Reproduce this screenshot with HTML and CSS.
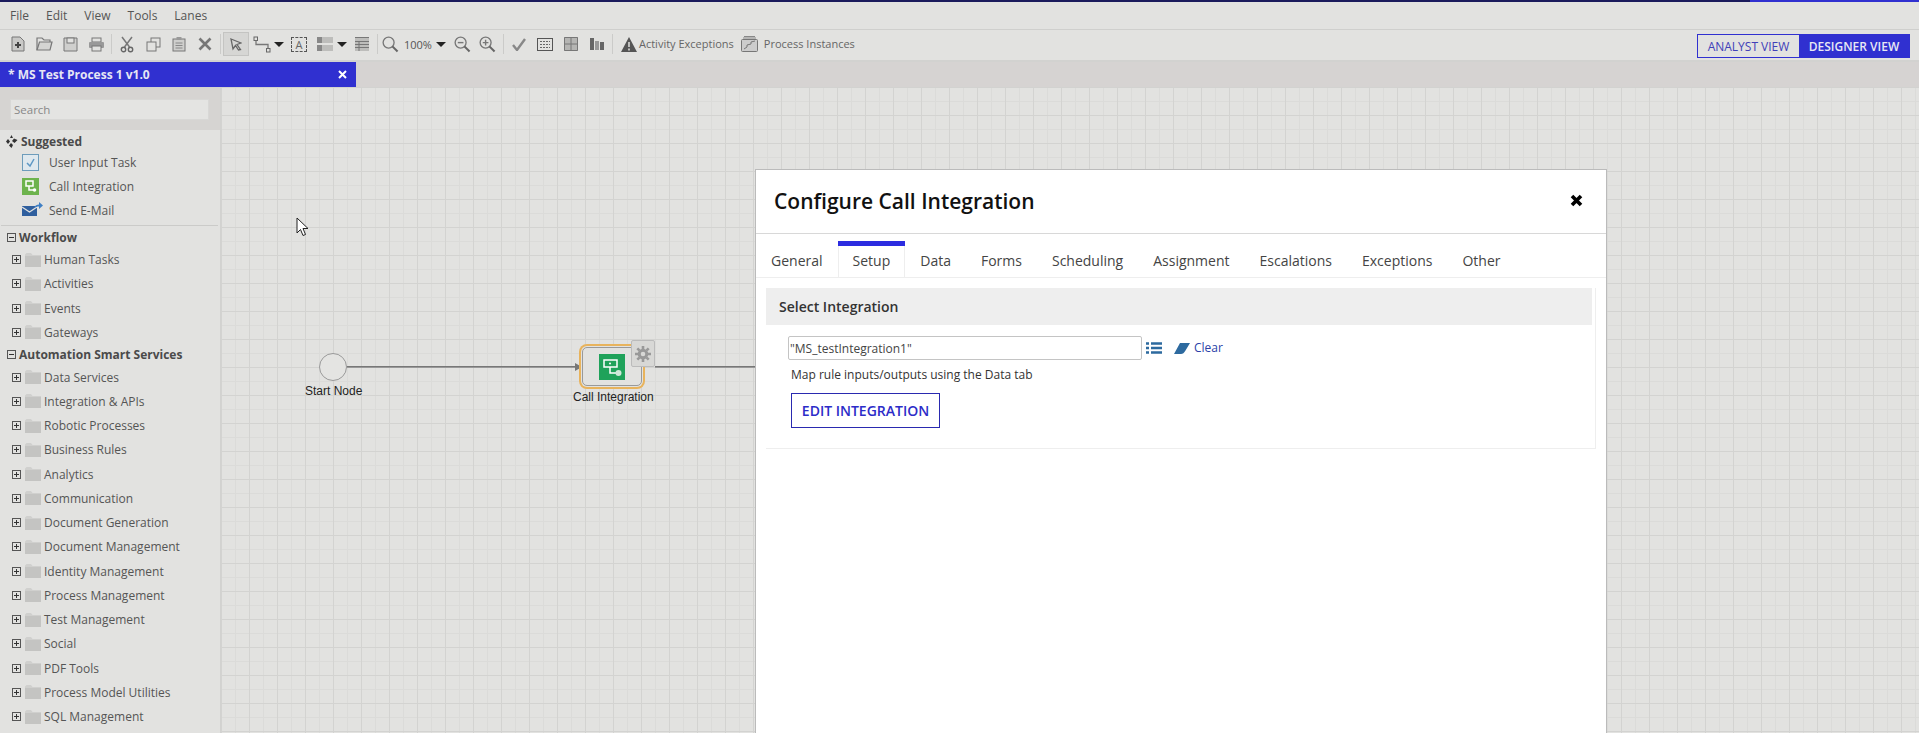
FILE: index.html
```html
<!DOCTYPE html>
<html lang="en">
<head>
    <meta charset="UTF-8">
    <title>MS Test Process 1 v1.0</title>
    <link rel="stylesheet" href="styles.css">
</head>
<body>
    <svg class="icon-defs" width="0" height="0">
        <symbol id="folder" viewBox="0 0 16 14">
            <path d="M0 3V1.500L1.500 0H6L7.500 2H16V3Z" fill="#d0d0ce"/>
            <rect y="3" width="16" height="11" fill="#c4c4c2"/>
        </symbol>
        <symbol id="plus-box" viewBox="0 0 9 9">
            <rect x=".5" y=".5" width="8" height="8" fill="none" stroke="#555"/>
            <path d="M2 4.500H7M4.500 2V7" stroke="#333" fill="none"/>
        </symbol>
        <symbol id="minus-box" viewBox="0 0 9 9">
            <rect x=".5" y=".5" width="8" height="8" fill="none" stroke="#555"/>
            <path d="M2 4.500H7" stroke="#333" fill="none"/>
        </symbol>
        <symbol id="loupe" viewBox="0 0 18 18">
            <circle cx="7" cy="7" r="5.800" fill="none" stroke="#777" stroke-width="1.400"/>
            <path d="M11 11L16.500 16.500" stroke="#666" stroke-width="2.200"/>
        </symbol>
    </svg>

    <div class="top-line"></div>

    <nav class="menu-bar">
        <span>File</span>
        <span>Edit</span>
        <span>View</span>
        <span>Tools</span>
        <span>Lanes</span>
    </nav>

    <div class="toolbar">
        <span class="tool"><svg width="14" height="16" viewBox="0 0 14 16"><path d="M1 1H9L13 5V15H1Z" fill="#c9c9c7" stroke="#777"/><path d="M4 9H10M7 6V12" stroke="#444" stroke-width="2"/></svg></span>
        <span class="tool"><svg width="17" height="14" viewBox="0 0 17 14"><path d="M1 13V1H6L8 3H14V5" fill="none" stroke="#777" stroke-width="1.200"/><path d="M1 13L3.500 5H16L14 13Z" fill="#d4d4d2" stroke="#777" stroke-width="1.200"/></svg></span>
        <span class="tool"><svg width="15" height="15" viewBox="0 0 15 15"><path d="M1 1H14V14H1Z" fill="#cfcfcd" stroke="#777"/><rect x="4" y="1" width="7" height="5" fill="#e2e2e0" stroke="#777"/></svg></span>
        <span class="tool"><svg width="17" height="15" viewBox="0 0 17 15"><rect x="4" y="1" width="9" height="4" fill="none" stroke="#777"/><rect x="1" y="5" width="15" height="6" rx="1" fill="#999"/><rect x="4" y="9" width="9" height="5" fill="#e2e2e0" stroke="#777"/></svg></span>
        <i class="tool-sep"></i>
        <span class="tool"><svg width="14" height="17" viewBox="0 0 14 17"><path d="M2 1L9.500 11M12 1L4.500 11" stroke="#777" stroke-width="1.500" fill="none"/><circle cx="3.500" cy="13.500" r="2.200" fill="none" stroke="#666" stroke-width="1.400"/><circle cx="10.500" cy="13.500" r="2.200" fill="none" stroke="#666" stroke-width="1.400"/></svg></span>
        <span class="tool"><svg width="15" height="15" viewBox="0 0 15 15"><rect x="5" y="1" width="9" height="9" fill="none" stroke="#777"/><rect x="1" y="5" width="9" height="9" fill="#e2e2e0" stroke="#777"/></svg></span>
        <span class="tool"><svg width="14" height="16" viewBox="0 0 14 16"><rect x="1" y="3" width="12" height="12" fill="#cfcfcd" stroke="#777"/><rect x="4.500" y="1" width="5" height="3" fill="#999"/><path d="M3.500 7H10.500M3.500 9.500H10.500M3.500 12H10.500" stroke="#888"/></svg></span>
        <span class="tool"><svg width="14" height="14" viewBox="0 0 14 14"><path d="M1.500 1.500L12.500 12.500M12.500 1.500L1.500 12.500" stroke="#777" stroke-width="2.600"/></svg></span>
        <i class="tool-sep"></i>
        <span class="tool tool-active"><svg width="12" height="13" viewBox="0 0 12 13"><path d="M1 1L11 5L7 6.500L10.500 11.500L8.500 12L5.500 7.500L3 11Z" fill="none" stroke="#666" stroke-width="1.300"/></svg></span>
        <span class="tool"><svg width="18" height="17" viewBox="0 0 18 17"><rect x="1" y="1" width="3.500" height="3.500" fill="none" stroke="#666"/><rect x="13.500" y="12.500" width="3.500" height="3.500" fill="none" stroke="#666"/><path d="M3 4.500V8.500H15V12.500" fill="none" stroke="#777" stroke-width="1.300"/></svg></span>
        <span class="tool-caret"></span>
        <span class="tool"><span class="text-tool">A</span></span>
        <span class="tool"><svg width="16" height="14" viewBox="0 0 16 14"><rect width="16" height="6" fill="#888"/><rect y="8" width="16" height="6" fill="#888"/><rect x="5" y="0" width="11" height="6" fill="#bdbdbb"/><rect x="5" y="8" width="11" height="6" fill="#bdbdbb"/></svg></span>
        <span class="tool-caret"></span>
        <span class="tool"><svg width="14" height="14" viewBox="0 0 14 14"><rect width="14" height="14" fill="#bdbdbb"/><path d="M0 .5H14M0 4.500H14M0 7.500H14M0 10.500H14M4 4V14" stroke="#777"/></svg></span>
        <i class="tool-sep"></i>
        <span class="tool tool-zoom"><svg width="17" height="17"><use href="#loupe"/></svg></span>
        <span class="zoom-value">100%</span>
        <span class="tool-caret"></span>
        <span class="tool tool-zoom zoom-out"><svg width="17" height="17" viewBox="0 0 18 18"><use href="#loupe"/><path d="M4 7H10" stroke="#777" stroke-width="1.500"/></svg></span>
        <span class="tool tool-zoom zoom-in"><svg width="17" height="17" viewBox="0 0 18 18"><use href="#loupe"/><path d="M4 7H10M7 4V10" stroke="#777" stroke-width="1.500"/></svg></span>
        <i class="tool-sep"></i>
        <span class="tool"><svg width="14" height="13" viewBox="0 0 14 13"><path d="M1 7L5 12L13 1" fill="none" stroke="#888" stroke-width="2.400"/></svg></span>
        <span class="tool"><svg width="16" height="13" viewBox="0 0 16 13"><rect x=".5" y=".5" width="15" height="12" fill="none" stroke="#555"/><path d="M3 3.500H13M3 6.500H13M3 9.500H13" stroke="#666" stroke-dasharray="2 1"/></svg></span>
        <span class="tool"><svg width="14" height="14" viewBox="0 0 14 14"><rect width="14" height="14" fill="#b5b5b3"/><path d="M7 0V14M0 7H14M.5 .5H13.500V13.500H.5Z" stroke="#777" fill="none"/></svg></span>
        <span class="tool"><svg width="14" height="12" viewBox="0 0 14 12"><rect width="4" height="12" fill="#666"/><rect x="5" y="3" width="4" height="9" fill="#999"/><rect x="10" y="4" width="4" height="8" fill="#666"/></svg></span>
        <i class="tool-sep"></i>
        <span class="tool-label">
            <svg width="16" height="15" viewBox="0 0 16 15"><path d="M8 0L16 15H0Z" fill="#555"/><path d="M8 5V10M8 11.500V13.500" stroke="#e2e2e0" stroke-width="1.500"/></svg>
            <span>Activity Exceptions</span>
        </span>
        <span class="tool-label">
            <svg width="17" height="16" viewBox="0 0 17 16"><path d="M3 .5H14M2 2H15" stroke="#888"/><rect x=".5" y="3.500" width="16" height="12" rx="1" fill="#ccc" stroke="#777"/><path d="M3 13L6 11V9L10 8V6L14 5" fill="none" stroke="#777"/></svg>
            <span>Process Instances</span>
        </span>

        <div class="view-switch">
            <span class="view-analyst">ANALYST VIEW</span>
            <span class="view-designer">DESIGNER VIEW</span>
        </div>
    </div>

    <div class="tab-strip">
        <div class="doc-tab">
            <span>* MS Test Process 1 v1.0</span>
            <svg width="9" height="9" viewBox="0 0 9 9"><path d="M1 1L8 8M8 1L1 8" stroke="#fff" stroke-width="2"/></svg>
        </div>
    </div>

    <div class="workspace">
        <aside class="palette">
            <div class="palette-search">
                <input type="text" placeholder="Search">
            </div>
            <div class="palette-list">
                <div class="suggested-head">
                    <svg width="13" height="13" viewBox="0 0 13 13"><path d="M6.500 0L8 3L5 3ZM3 4L5 6.500L3 9L1 6.500ZM9 3.500L12.500 5L9.500 8L7 6ZM6 8L8 10L6.500 13L4 10.500Z" fill="#333"/></svg>
                    Suggested
                </div>
                <div class="suggested-item">
                    <svg width="17" height="17" viewBox="0 0 17 17"><rect x=".5" y=".5" width="16" height="16" fill="#dfe8ee" stroke="#6d9cbb"/><path d="M5 9L8 12L12 5" fill="none" stroke="#5d97c4" stroke-width="1.500"/></svg>
                    User Input Task
                </div>
                <div class="suggested-item">
                    <svg width="17" height="17" viewBox="0 0 17 17"><rect width="17" height="17" fill="#6db34d"/><path d="M4 3H11V8H4ZM7 8V12H11" fill="none" stroke="#fff" stroke-width="1.500"/><circle cx="12.500" cy="12" r="1.800" fill="#fff"/></svg>
                    Call Integration
                </div>
                <div class="suggested-item">
                    <svg width="21" height="14" viewBox="0 0 21 14"><rect y="4" width="15" height="10" fill="#2f5f9e"/><path d="M0 5L7.500 10L15 5" fill="none" stroke="#e2e2e0" stroke-width="1.200"/><path d="M12 6C13 3 15 2.500 17 2.500V0L21 3.500L17 7V4.500C15 4.500 13.500 5 12 6Z" fill="#3f7fc4"/></svg>
                    Send E-Mail
                </div>
                <div class="palette-rule"></div>

                <div class="group-head"><svg width="9" height="9"><use href="#minus-box"/></svg>Workflow</div>
                <div class="tree-row"><svg width="9" height="9"><use href="#plus-box"/></svg><svg width="16" height="14"><use href="#folder"/></svg>Human Tasks</div>
                <div class="tree-row"><svg width="9" height="9"><use href="#plus-box"/></svg><svg width="16" height="14"><use href="#folder"/></svg>Activities</div>
                <div class="tree-row"><svg width="9" height="9"><use href="#plus-box"/></svg><svg width="16" height="14"><use href="#folder"/></svg>Events</div>
                <div class="tree-row"><svg width="9" height="9"><use href="#plus-box"/></svg><svg width="16" height="14"><use href="#folder"/></svg>Gateways</div>

                <div class="group-head"><svg width="9" height="9"><use href="#minus-box"/></svg>Automation Smart Services</div>
                <div class="tree-row"><svg width="9" height="9"><use href="#plus-box"/></svg><svg width="16" height="14"><use href="#folder"/></svg>Data Services</div>
                <div class="tree-row"><svg width="9" height="9"><use href="#plus-box"/></svg><svg width="16" height="14"><use href="#folder"/></svg>Integration &amp; APIs</div>
                <div class="tree-row"><svg width="9" height="9"><use href="#plus-box"/></svg><svg width="16" height="14"><use href="#folder"/></svg>Robotic Processes</div>
                <div class="tree-row"><svg width="9" height="9"><use href="#plus-box"/></svg><svg width="16" height="14"><use href="#folder"/></svg>Business Rules</div>
                <div class="tree-row"><svg width="9" height="9"><use href="#plus-box"/></svg><svg width="16" height="14"><use href="#folder"/></svg>Analytics</div>
                <div class="tree-row"><svg width="9" height="9"><use href="#plus-box"/></svg><svg width="16" height="14"><use href="#folder"/></svg>Communication</div>
                <div class="tree-row"><svg width="9" height="9"><use href="#plus-box"/></svg><svg width="16" height="14"><use href="#folder"/></svg>Document Generation</div>
                <div class="tree-row"><svg width="9" height="9"><use href="#plus-box"/></svg><svg width="16" height="14"><use href="#folder"/></svg>Document Management</div>
                <div class="tree-row"><svg width="9" height="9"><use href="#plus-box"/></svg><svg width="16" height="14"><use href="#folder"/></svg>Identity Management</div>
                <div class="tree-row"><svg width="9" height="9"><use href="#plus-box"/></svg><svg width="16" height="14"><use href="#folder"/></svg>Process Management</div>
                <div class="tree-row"><svg width="9" height="9"><use href="#plus-box"/></svg><svg width="16" height="14"><use href="#folder"/></svg>Test Management</div>
                <div class="tree-row"><svg width="9" height="9"><use href="#plus-box"/></svg><svg width="16" height="14"><use href="#folder"/></svg>Social</div>
                <div class="tree-row"><svg width="9" height="9"><use href="#plus-box"/></svg><svg width="16" height="14"><use href="#folder"/></svg>PDF Tools</div>
                <div class="tree-row"><svg width="9" height="9"><use href="#plus-box"/></svg><svg width="16" height="14"><use href="#folder"/></svg>Process Model Utilities</div>
                <div class="tree-row"><svg width="9" height="9"><use href="#plus-box"/></svg><svg width="16" height="14"><use href="#folder"/></svg>SQL Management</div>
            </div>
        </aside>

        <main class="canvas">
            <!-- diagram nodes, placed by canvas coordinates -->
            <div class="flow-line flow-in"></div>
            <div class="flow-arrow"></div>
            <div class="flow-line flow-out"></div>
            <div class="start-node"></div>
            <div class="node-label start-label">Start Node</div>
            <div class="task-node">
                <svg width="26" height="26" viewBox="0 0 26 26"><rect width="26" height="26" fill="#1fa25a"/><path d="M5 6H18V13H5ZM11 13V19H17" fill="none" stroke="#fff" stroke-width="1.500"/><circle cx="11" cy="9.500" r="1" fill="#fff"/><circle cx="19.500" cy="19" r="3" fill="#cfe9d9"/></svg>
            </div>
            <div class="gear-box">
                <svg width="16" height="16" viewBox="0 0 16 16"><circle cx="8" cy="8" r="3.800" fill="none" stroke="#999" stroke-width="3"/><path d="M8 0V3M8 13V16M0 8H3M13 8H16M2.300 2.300L4.400 4.400M11.600 11.600L13.700 13.700M13.700 2.300L11.600 4.400M4.400 11.600L2.300 13.700" stroke="#999" stroke-width="2.600"/></svg>
            </div>
            <div class="node-label task-label">Call Integration</div>

            <svg class="mouse-cursor" width="13" height="20" viewBox="0 0 13 20"><path d="M1 1V16L4.500 12.500L7 18.500L9.500 17.500L7 11.500H12Z" fill="#fff" stroke="#222"/></svg>

            <section class="modal">
                <header class="modal-head">
                    <h1>Configure Call Integration</h1>
                    <svg width="13" height="13" viewBox="0 0 13 13"><path d="M2 2L11 11M11 2L2 11" stroke="#000" stroke-width="3.600"/></svg>
                </header>
                <div class="modal-tabs">
                    <span class="modal-tab">General</span>
                    <span class="modal-tab modal-tab-active">Setup</span>
                    <span class="modal-tab">Data</span>
                    <span class="modal-tab">Forms</span>
                    <span class="modal-tab">Scheduling</span>
                    <span class="modal-tab">Assignment</span>
                    <span class="modal-tab">Escalations</span>
                    <span class="modal-tab">Exceptions</span>
                    <span class="modal-tab">Other</span>
                </div>
                <div class="setup-box">
                    <h2>Select Integration</h2>
                    <div class="setup-body">
                        <div class="rule-row">
                            <input type="text" value="&quot;MS_testIntegration1&quot;">
                            <svg class="list-icon" width="16" height="12" viewBox="0 0 16 12"><path d="M0 1.500H3M5 1.500H16M0 6H3M5 6H16M0 10.500H3M5 10.500H16" stroke="#2d6a9f" stroke-width="2.400"/></svg>
                            <svg class="eraser-icon" width="16" height="11" viewBox="0 0 16 11"><path d="M6 0H16L11.500 7.500Q9.500 11 7 11H0Z" fill="#2d6a9f"/></svg>
                            <a class="clear-link" href="#">Clear</a>
                        </div>
                        <p class="help-text">Map rule inputs/outputs using the Data tab</p>
                        <button type="button" class="btn-edit">EDIT INTEGRATION</button>
                    </div>
                </div>
            </section>
        </main>
    </div>
</body>
</html>
```

FILE: styles.css
```css
html, body {
    height: 100%;
}
body {
    margin: 0;
    display: flex;
    flex-direction: column;
    overflow: hidden;
    background: #e2e2e0;
    font-family: 'Open Sans', sans-serif;
    font-size: 12px;
    color: #555;
}
.icon-defs {
    position: absolute;
}

.top-line {
    height: 2px;
    flex: none;
    background: linear-gradient(to right, #1a1a5c 1750px, #3030d0 1750px);
}

/* menu and toolbar */
.menu-bar {
    height: 28px;
    flex: none;
    box-sizing: border-box;
    display: flex;
    align-items: center;
    gap: 17px;
    padding-left: 10px;
    border-bottom: 1px solid #cfcfcd;
}
.toolbar {
    height: 32px;
    flex: none;
    box-sizing: border-box;
    display: flex;
    align-items: center;
    padding: 0 9px 2px 5px;
    border-bottom: 2px solid #d2d2d0;
}
.tool {
    width: 26px;
    height: 24px;
    flex: none;
    box-sizing: border-box;
    display: flex;
    align-items: center;
    justify-content: center;
}
.tool-active {
    background: #d6d6d4;
    border: 1px solid #c4c4c2;
}
.tool-sep {
    width: 1px;
    height: 20px;
    flex: none;
    margin: 0 2px;
    background: #cbcbc9;
}
.tool-caret {
    width: 0;
    height: 0;
    flex: none;
    margin: 0 2px 0 -1px;
    border-left: 5px solid transparent;
    border-right: 5px solid transparent;
    border-top: 5px solid #222;
}
.text-tool {
    width: 16px;
    height: 15px;
    box-sizing: border-box;
    border: 1px dashed #555;
    font-size: 11px;
    line-height: 14px;
    text-align: center;
    color: #666;
}
.tool-zoom {
    width: 20px;
}
.zoom-out {
    margin-left: 5px;
}
.zoom-in {
    margin-left: 5px;
    margin-right: 3px;
}
.zoom-value {
    margin: 0 5px 0 4px;
    font-size: 11px;
}
.tool-label {
    display: flex;
    align-items: center;
    gap: 2px;
    margin-left: 6px;
    font-size: 11px;
    color: #666;
}
.tool-label span {
    margin-top: -2px;
}
.tool-label + .tool-label {
    margin-left: 7px;
    gap: 6px;
}
.view-switch {
    display: flex;
    height: 24px;
    margin-left: auto;
    align-self: flex-end;
    box-sizing: border-box;
    border: 1px solid #3030d0;
}
.view-switch span {
    display: flex;
    align-items: center;
    justify-content: center;
    font-size: 12px;
}
.view-analyst {
    width: 101px;
    color: #4040b8;
}
.view-designer {
    width: 110px;
    background: #3030d0;
    color: #e8e8f4;
    font-weight: 600;
}

/* document tab */
.tab-strip {
    height: 25px;
    flex: none;
    background: #d6d3d2;
}
.doc-tab {
    width: 356px;
    height: 25px;
    box-sizing: border-box;
    display: flex;
    align-items: center;
    justify-content: space-between;
    padding: 0 9px 1px 8px;
    background: #3030d0;
    color: #e6e6f4;
    font-size: 12px;
    font-weight: 700;
}

.workspace {
    flex: 1;
    min-height: 0;
    display: flex;
    border-top: 1px solid #d2d2d0;
}

/* left palette */
.palette {
    width: 220px;
    flex: none;
    overflow: hidden;
    border-right: 1px solid #d2d2d0;
    background: #e2e2e0;
}
.palette-search {
    height: 42px;
    box-sizing: border-box;
    padding: 11px 11px 0 10px;
    background: #d6d4d2;
}
.palette-search input {
    width: 100%;
    height: 21px;
    box-sizing: border-box;
    padding: 0 3px;
    border: 1px solid #d8d8d6;
    background: #e4e4e2;
    font-family: inherit;
    font-size: 11.5px;
}
.palette-search input::placeholder {
    color: #888;
}
.palette-list {
    padding-top: 2px;
}
.suggested-head {
    height: 18px;
    display: flex;
    align-items: center;
    gap: 3px;
    padding-left: 5px;
    font-weight: 700;
    color: #4a4a4a;
}
.suggested-item {
    height: 24px;
    position: relative;
    display: flex;
    align-items: center;
    padding-left: 49px;
}
.suggested-item svg {
    position: absolute;
    left: 22px;
    top: 4px;
}
.palette-rule {
    margin: 3px 2px 1px 1px;
    border-top: 1px solid #cbcbc9;
}
.group-head {
    height: 20.5px;
    display: flex;
    align-items: center;
    gap: 3px;
    padding-left: 7px;
    font-weight: 700;
    color: #4a4a4a;
}
.tree-row {
    height: 24.25px;
    display: flex;
    align-items: center;
    padding-left: 12px;
}
.tree-row svg + svg {
    margin: 0 3px 0 4px;
}

/* canvas */
.canvas {
    flex: 1;
    min-width: 0;
    position: relative;
    overflow: hidden;
    background-color: #e2e2e0;
    background-image:
        linear-gradient(to right, #d3d3d1 1px, transparent 1px),
        linear-gradient(to bottom, #d3d3d1 1px, transparent 1px),
        linear-gradient(to right, #dbdbd9 1px, transparent 1px),
        linear-gradient(to bottom, #dbdbd9 1px, transparent 1px);
    background-size: 28px 28px, 28px 28px, 14px 14px, 14px 14px;
    background-position: 28px 27px, 28px 27px, 14px 13px, 14px 13px;
}
.flow-line {
    position: absolute;
    top: 278px;
    height: 1px;
    background: #777;
    border-bottom: 1px solid #999;
}
.flow-in {
    left: 126px;
    width: 235px;
}
.flow-out {
    left: 434px;
    width: 102px;
}
.flow-arrow {
    position: absolute;
    left: 354px;
    top: 275px;
    border-left: 7px solid #777;
    border-top: 4px solid transparent;
    border-bottom: 4px solid transparent;
}
.start-node {
    position: absolute;
    left: 98px;
    top: 265px;
    width: 28px;
    height: 28px;
    box-sizing: border-box;
    border: 1px solid #999;
    border-radius: 50%;
    background: #e4e4e2;
}
.node-label {
    position: absolute;
    font-family: 'Liberation Sans', sans-serif;
    font-size: 12px;
    white-space: nowrap;
    color: #222;
}
.start-label {
    left: 84px;
    top: 296px;
}
.task-label {
    left: 352px;
    top: 302px;
}
.task-node {
    position: absolute;
    left: 361px;
    top: 259px;
    width: 60px;
    height: 39px;
    box-sizing: border-box;
    display: flex;
    align-items: center;
    justify-content: center;
    border: 1px solid #999;
    border-radius: 5px;
    background: #e2e2e0;
    box-shadow: 0 0 0 1px #e2e2e0, 0 0 0 3px #e8b35c;
}
.gear-box {
    position: absolute;
    left: 410px;
    top: 252px;
    width: 24px;
    height: 27px;
    box-sizing: border-box;
    display: flex;
    align-items: center;
    justify-content: center;
    border: 1px solid #bbb;
    border-radius: 2px;
    background: #d8d8d6;
}
.mouse-cursor {
    position: absolute;
    left: 75px;
    top: 129px;
}

/* configure dialog */
.modal {
    position: absolute;
    left: 534px;
    top: 81px;
    width: 852px;
    height: 600px;
    box-sizing: border-box;
    border: 1px solid #bbb;
    background: #fff;
    color: #333;
}
.modal-head {
    height: 64px;
    box-sizing: border-box;
    display: flex;
    align-items: center;
    justify-content: space-between;
    padding: 0 23px 2px 18px;
    border-bottom: 1px solid #d8d8d8;
}
.modal-head h1 {
    margin: 0;
    font-size: 21px;
    font-weight: 600;
    color: #111;
}
.modal-tabs {
    display: flex;
    height: 44px;
    box-sizing: border-box;
    border-bottom: 1px solid #eee;
}
.modal-tab {
    height: 36px;
    box-sizing: border-box;
    margin-top: 7px;
    padding: 0 15px 2px;
    display: flex;
    align-items: center;
    border-top: 5px solid transparent;
    font-size: 14px;
    color: #444;
}
.modal-tab-active {
    border-top-color: #2c2ce0;
    box-shadow: inset 1px 0 #eee, inset -1px 0 #eee;
}
.setup-box {
    margin: 10px 10px 0 10px;
    padding-right: 3px;
    border: 1px solid #eee;
    border-top: 0;
    border-left: 0;
}
.setup-box h2 {
    height: 37px;
    margin: 0;
    padding-left: 13px;
    line-height: 38px;
    background: #eee;
    font-size: 14px;
    font-weight: 600;
    color: #333;
}
.setup-body {
    padding: 11px 0 20px 22px;
}
.rule-row {
    display: flex;
    align-items: center;
}
.rule-row input {
    width: 354px;
    height: 24px;
    box-sizing: border-box;
    padding: 0 1px;
    border: 1px solid #c4c4c4;
    border-radius: 2px;
    font-family: inherit;
    font-size: 12px;
    color: #444;
}
.list-icon {
    margin-left: 4px;
}
.eraser-icon {
    margin-left: 12px;
}
.clear-link {
    margin: -2px 0 0 4px;
    color: #2b3fa8;
    text-decoration: none;
    font-size: 12px;
}
.help-text {
    margin: 6px 0 0 3px;
    font-size: 12px;
    line-height: 18px;
    color: #333;
}
.btn-edit {
    display: block;
    width: 149px;
    height: 35px;
    margin: 9px 0 0 3px;
    padding: 0;
    border: 1px solid #2a2ab0;
    background: #fff;
    color: #2c2cc8;
    font-family: inherit;
    font-size: 14px;
    font-weight: 600;
}
```
